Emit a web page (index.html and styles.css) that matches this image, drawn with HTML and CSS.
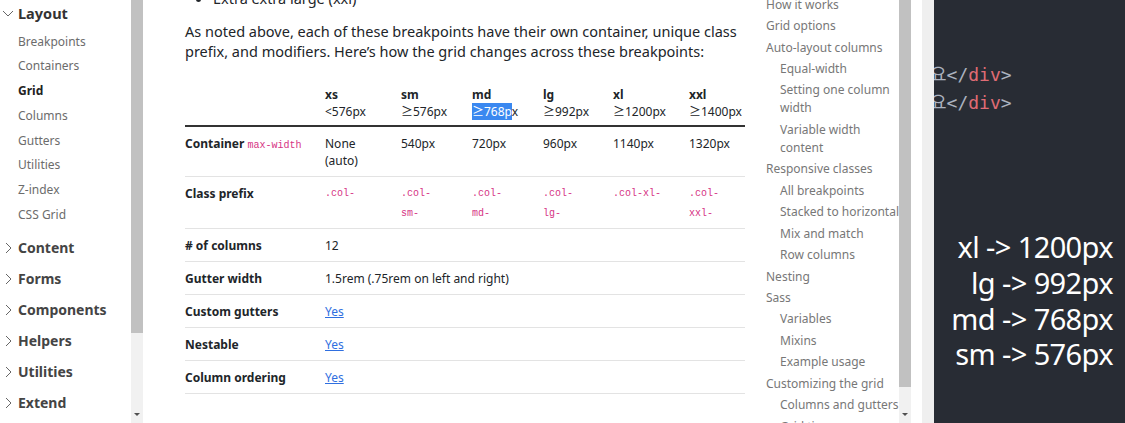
FILE: index.html
```html
<!DOCTYPE html>
<html lang="en">
<head>
<meta charset="utf-8">
<title>Grid system</title>
<link rel="stylesheet" href="styles.css">
</head>
<body>
<div class="screen">
  <nav class="sidebar">
    <div class="group open">
      <div class="group-title"><svg class="chev" viewBox="0 0 12 12"><polyline points="1,4 6,9 11,4"/></svg>Layout</div>
      <ul class="sub">
        <li>Breakpoints</li>
        <li>Containers</li>
        <li class="active">Grid</li>
        <li>Columns</li>
        <li>Gutters</li>
        <li>Utilities</li>
        <li>Z-index</li>
        <li>CSS Grid</li>
      </ul>
    </div>
    <div class="group-title closed"><svg class="chev" viewBox="0 0 12 12"><polyline points="4,1 9,6 4,11"/></svg>Content</div>
    <div class="group-title closed"><svg class="chev" viewBox="0 0 12 12"><polyline points="4,1 9,6 4,11"/></svg>Forms</div>
    <div class="group-title closed"><svg class="chev" viewBox="0 0 12 12"><polyline points="4,1 9,6 4,11"/></svg>Components</div>
    <div class="group-title closed"><svg class="chev" viewBox="0 0 12 12"><polyline points="4,1 9,6 4,11"/></svg>Helpers</div>
    <div class="group-title closed"><svg class="chev" viewBox="0 0 12 12"><polyline points="4,1 9,6 4,11"/></svg>Utilities</div>
    <div class="group-title closed"><svg class="chev" viewBox="0 0 12 12"><polyline points="4,1 9,6 4,11"/></svg>Extend</div>
  </nav>
  <div class="scrollbar sb-left">
    <div class="thumb"></div>
    <div class="track"><span class="arrow"></span></div>
  </div>

  <main class="main">
    <ul class="bullets"><li>Extra extra large (xxl)</li></ul>
    <p class="lead">As noted above, each of these breakpoints have their own container, unique class prefix, and modifiers. Here’s how the grid changes across these breakpoints:</p>
    <table class="grid-table">
      <colgroup>
        <col class="c0"><col class="c1"><col class="c2"><col class="c3"><col class="c4"><col class="c5"><col class="c6">
      </colgroup>
      <thead>
        <tr>
          <th></th>
          <th><b>xs</b><br><span class="bp">&lt;576px</span></th>
          <th><b>sm</b><br><span class="bp">≥576px</span></th>
          <th><b>md</b><br><span class="bp"><span class="sel">≥768p</span>x</span></th>
          <th><b>lg</b><br><span class="bp">≥992px</span></th>
          <th><b>xl</b><br><span class="bp">≥1200px</span></th>
          <th><b>xxl</b><br><span class="bp">≥1400px</span></th>
        </tr>
      </thead>
      <tbody>
        <tr>
          <th>Container <code>max-width</code></th>
          <td>None (auto)</td>
          <td>540px</td>
          <td>720px</td>
          <td>960px</td>
          <td>1140px</td>
          <td>1320px</td>
        </tr>
        <tr class="code-row">
          <th>Class prefix</th>
          <td><code>.col-</code></td>
          <td><code>.col-<br>sm-</code></td>
          <td><code>.col-<br>md-</code></td>
          <td><code>.col-<br>lg-</code></td>
          <td><code>.col-xl-</code></td>
          <td><code>.col-<br>xxl-</code></td>
        </tr>
        <tr>
          <th># of columns</th>
          <td colspan="6">12</td>
        </tr>
        <tr>
          <th>Gutter width</th>
          <td colspan="6">1.5rem (.75rem on left and right)</td>
        </tr>
        <tr>
          <th>Custom gutters</th>
          <td colspan="6"><a href="#">Yes</a></td>
        </tr>
        <tr>
          <th>Nestable</th>
          <td colspan="6"><a href="#">Yes</a></td>
        </tr>
        <tr>
          <th>Column ordering</th>
          <td colspan="6"><a href="#">Yes</a></td>
        </tr>
      </tbody>
    </table>
  </main>

  <aside class="toc">
    <ul>
      <li>How it works</li>
      <li>Grid options</li>
      <li>Auto-layout columns
        <ul>
          <li>Equal-width</li>
          <li>Setting one column width</li>
          <li>Variable width content</li>
        </ul>
      </li>
      <li>Responsive classes
        <ul>
          <li>All breakpoints</li>
          <li>Stacked to horizontal</li>
          <li>Mix and match</li>
          <li>Row columns</li>
        </ul>
      </li>
      <li>Nesting</li>
      <li>Sass
        <ul>
          <li>Variables</li>
          <li>Mixins</li>
          <li>Example usage</li>
        </ul>
      </li>
      <li>Customizing the grid
        <ul>
          <li>Columns and gutters</li>
          <li>Grid tiers</li>
        </ul>
      </li>
    </ul>
  </aside>
  <div class="scrollbar sb-right">
    <div class="thumb"></div>
    <div class="track"><span class="arrow"></span></div>
  </div>
  <div class="gap-white"></div>
  <div class="gap-gray"></div>

  <section class="dark">
    <div class="code-lines">
      <div class="cl"><span class="kr">요</span><span class="pn">&lt;/</span><span class="tg">div</span><span class="pn">&gt;</span></div>
      <div class="cl"><span class="kr">요</span><span class="pn">&lt;/</span><span class="tg">div</span><span class="pn">&gt;</span></div>
    </div>
    <div class="notes">
      <div>xl -&gt; 1200px</div>
      <div>lg -&gt; 992px</div>
      <div>md -&gt; 768px</div>
      <div>sm -&gt; 576px</div>
    </div>
  </section>
</div>
</body>
</html>
```

FILE: styles.css
```css
* { box-sizing: border-box; }
html, body { margin: 0; padding: 0; }
body {
  width: 1125px;
  height: 423px;
  overflow: hidden;
  background: #fff;
  font-family: "Noto Sans", "Noto Sans CJK KR", sans-serif;
  color: #212529;
}
ul { list-style: none; margin: 0; padding: 0; }

.screen {
  display: flex;
  height: 423px;
  overflow: hidden;
}

/* ---------- left sidebar ---------- */
.sidebar {
  width: 131px;
  flex: none;
  padding-top: 2px;
  overflow: hidden;
}
.group-title {
  display: flex;
  align-items: center;
  height: 22px;
  font-size: 14px;
  font-weight: 700;
  color: #333;
  white-space: nowrap;
}
.group-title.closed { height: 31px; color: #444; }
.group.open .group-title { font-size: 14.5px; color: #333; }
.chev {
  width: 12px;
  height: 12px;
  margin: 0 4px 0 2px;
  fill: none;
  stroke: #666;
  stroke-width: 1;
}
.sub { padding: 5.5px 0 4.5px 18px; }
.sub li {
  height: 24.75px;
  line-height: 24.75px;
  font-size: 12px;
  color: #6c6c6c;
}
.sub li.active { color: #222; font-weight: 700; }

/* ---------- scrollbars ---------- */
.scrollbar {
  width: 12px;
  flex: none;
  display: flex;
  flex-direction: column;
  background: #f1f1f1;
}
.scrollbar .thumb { background: #c1c1c1; }
.sb-left .thumb { height: 333px; }
.sb-right .thumb { height: 387px; }
.scrollbar .track {
  flex: 1;
  display: flex;
  align-items: flex-end;
  justify-content: center;
  padding-bottom: 7px;
}
.arrow {
  width: 0; height: 0;
  border-left: 3px solid transparent;
  border-right: 3px solid transparent;
  border-top: 3px solid #505050;
}

/* ---------- main ---------- */
.main {
  width: 614px;
  flex: none;
  padding: 0 12px 0 42px;
  font-size: 14.5px;
  overflow: hidden;
}
.bullets {
  list-style: disc;
  padding-left: 28px;
  margin: -12px 0 0 0;
  line-height: 20px;
  color: #212529;
}
.bullets li { list-style: disc; }
.lead {
  margin: 13px 0 14px 0;
  line-height: 20px;
  color: #212529;
}
.grid-table {
  border-collapse: collapse;
  width: 560px;
  table-layout: fixed;
  font-size: 12px;
}
.c0 { width: 140px; }
.c1 { width: 76px; }
.c2 { width: 71px; }
.c3 { width: 71px; }
.c4 { width: 70px; }
.c5 { width: 76px; }
.c6 { width: 56px; }
.grid-table th,
.grid-table td {
  padding: 8px 14px 7px 0;
  line-height: 17px;
  text-align: left;
  vertical-align: top;
  border-bottom: 1px solid #e3e3e3;
}
.grid-table thead th {
  padding: 11px 0 5px 0;
  font-weight: 400;
  border-bottom: 2px solid #333;
  white-space: nowrap;
}
.grid-table thead b { font-weight: 700; }
.grid-table tbody th { font-weight: 700; }
.sel { background: #3a88f0; color: #fff; }
code {
  font-family: "Liberation Mono", "DejaVu Sans Mono", monospace;
  font-size: 10px;
  font-weight: 400;
  color: #d63384;
}
.code-row td { padding-top: 7px; padding-bottom: 4px; }
.code-row code { display: block; line-height: 20px; }
.grid-table a { color: #2f6fe0; text-decoration: underline; }

/* ---------- toc ---------- */
.toc {
  width: 142px;
  flex: none;
  padding: 0 0 0 9px;
  font-size: 12px;
  color: #777;
  overflow: hidden;
}
.toc > ul { margin-top: -6px; }
.toc li { line-height: 18px; padding: 1.72px 0; }
.toc li ul { padding-left: 14px; margin-top: 1.72px; margin-bottom: -1.72px; }

.gap-white { width: 11px; flex: none; background: #fff; }
.gap-gray { width: 12px; flex: none; background: #efefef; }

/* ---------- dark panel ---------- */
.dark {
  flex: 1;
  background: #282c34;
  overflow: hidden;
  display: flex;
  flex-direction: column;
}
.code-lines {
  margin: 59px 0 0 -4px;
  font-family: "DejaVu Sans Mono", monospace;
  font-size: 18px;
  line-height: 28px;
  white-space: nowrap;
}
.cl { height: 28px; }
.kr { font-family: "Noto Sans CJK KR", sans-serif; color: #abb2bf; }
.pn { color: #abb2bf; }
.tg { color: #e06c75; }
.notes {
  margin-top: 114px;
  padding-right: 12px;
  text-align: right;
  color: #fff;
  font-family: "Noto Sans", sans-serif;
  font-size: 29px;
  line-height: 35.8px;
  letter-spacing: -0.6px;
}
```
